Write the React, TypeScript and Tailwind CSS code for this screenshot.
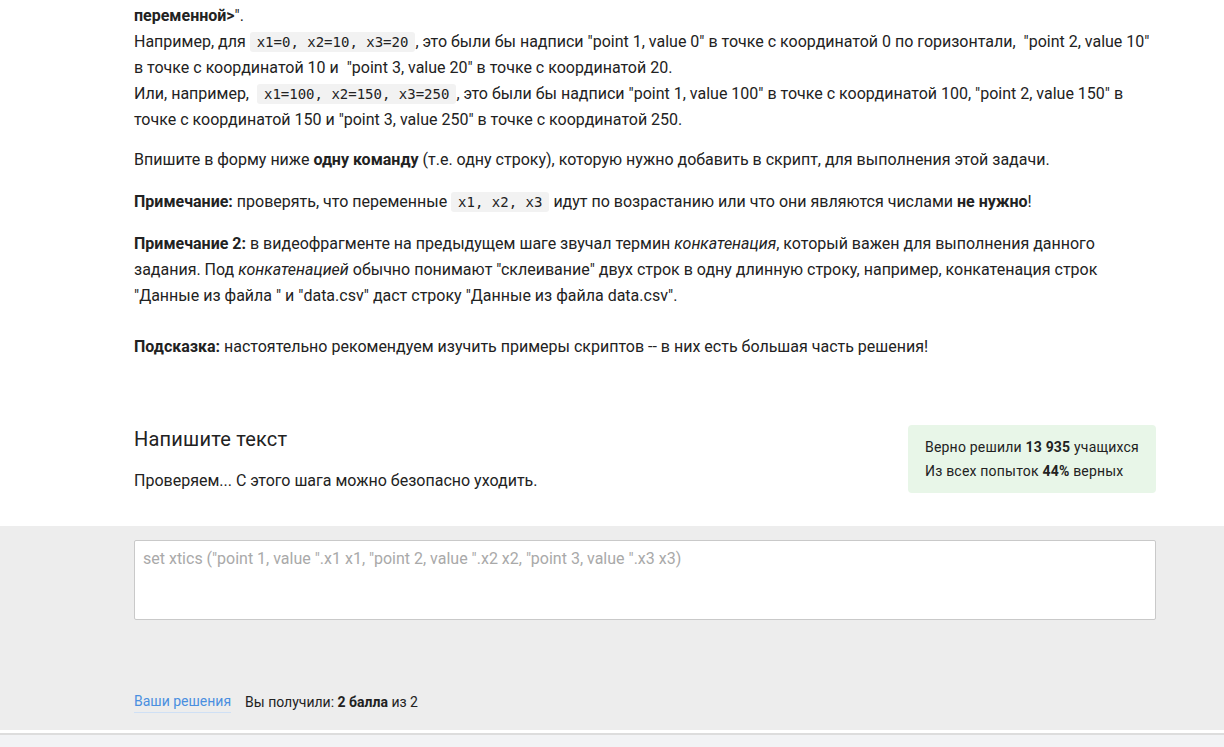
import React from "react";

const Code = ({ children }: { children: React.ReactNode }) => (
  <code className="rounded-[3px] bg-[#f2f2f2] px-[7px] py-[2px] font-['DejaVu_Sans_Mono',monospace] text-[14px] text-[#222]">
    {children}
  </code>
);

export default function App() {
  return (
    <div className="min-h-[747px] bg-white font-['Roboto',sans-serif] text-[#222]">
      <div className="ml-[134px] w-[1022px] pt-[3px] text-[16px] leading-[26px]">
        <p>
          <b>переменной&gt;</b>".
          <br />
          Например, для <Code>x1=0, x2=10, x3=20</Code>, это были бы надписи "point 1, value 0" в точке с координатой 0 по
          горизонтали,&nbsp; "point 2, value 10" в точке с координатой 10 и&nbsp; "point 3, value 20" в точке с координатой 20.
          <br />
          Или, например, &nbsp;<Code>x1=100, x2=150, x3=250</Code>, это были бы надписи "point 1, value 100" в точке с
          координатой 100, "point 2, value 150" в точке с координатой 150 и "point 3, value 250" в точке с координатой 250.
        </p>
        <p className="mt-[14px]">
          Впишите в форму ниже <b>одну команду</b> (т.е. одну строку), которую нужно добавить в скрипт, для выполнения этой
          задачи.
        </p>
        <p className="mt-[16px]">
          <b>Примечание:</b> проверять, что переменные <Code>x1, x2, x3</Code> идут по возрастанию или что они являются
          числами <b>не нужно</b>!
        </p>
        <p className="mt-[16px]">
          <b>Примечание 2:</b> в видеофрагменте на предыдущем шаге звучал термин <i>конкатенация</i>, который важен для
          выполнения данного задания. Под <i>конкатенацией</i> обычно понимают "склеивание" двух строк в одну длинную строку,
          например, конкатенация строк "Данные из файла " и "data.csv" даст строку "Данные из файла data.csv".
        </p>
        <p className="mt-[25px]">
          <b>Подсказка:</b> настоятельно рекомендуем изучить примеры скриптов -- в них есть большая часть решения!
        </p>

        <div className="mt-[65px] flex items-start justify-between pb-[32px]">
          <div>
            <h2 className="mt-[1px] text-[20px] leading-[26px] font-normal tracking-[0.2px] text-[#222]">Напишите текст</h2>
            <p className="mt-[16px] text-[16px] leading-[26px]">Проверяем... С этого шага можно безопасно уходить.</p>
          </div>
          <div className="w-[248px] rounded-[4px] bg-[#e8f6e8] px-[17px] py-[10px] text-[14px] leading-[24px] tracking-[0.2px] text-[#222]">
            <div>
              Верно решили <b>13 935</b> учащихся
            </div>
            <div>
              Из всех попыток <b>44%</b> верных
            </div>
          </div>
        </div>
      </div>

      <div className="bg-[#ededed] pt-[14px] pb-[17px]">
        <div className="ml-[134px] w-[1022px]">
          <div className="h-[80px] rounded-[2px] border border-[#c9c9c9] bg-white px-[8px] py-[6px] text-[16px] leading-[24px] text-[#a9a9a9]">
            set xtics ("point 1, value ".x1 x1, "point 2, value ".x2 x2, "point 3, value ".x3 x3)
          </div>
          <div className="mt-[70px] flex items-center gap-[14px] text-[14px] leading-[22px]">
            <a className="border-b border-[#cfe0f5] text-[#4a8fe0]">Ваши решения</a>
            <span className="text-[#222]">
              Вы получили: <b>2 балла</b> из 2
            </span>
          </div>
        </div>
      </div>
      <div className="mt-[3px] h-[16px] border-t-2 border-[#dddddd] bg-[#f2f3f5]" />
    </div>
  );
}
